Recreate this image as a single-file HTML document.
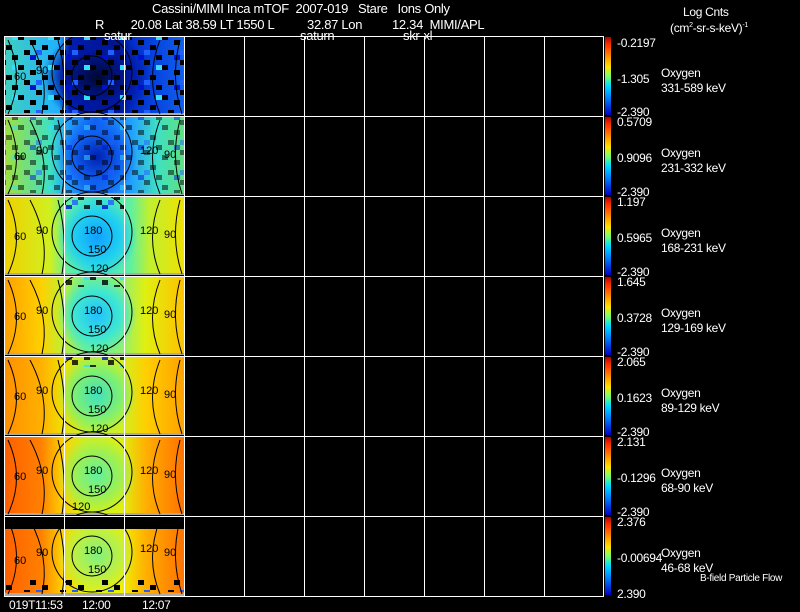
<!DOCTYPE html>
<html><head><style>
body{margin:0;background:#000;width:800px;height:609px;overflow:hidden;position:relative;font-family:"Liberation Sans",sans-serif;color:#fff}
.t{position:absolute;font-size:12px;white-space:pre;line-height:12px;letter-spacing:-0.3px}
.d{position:absolute;left:5px;width:180px;height:77px}
.g{position:absolute;left:5px;width:180px;height:2px;background:#aaa}
.cb{position:absolute;left:605px;width:6px;height:78px;background:linear-gradient(#b00000,#ff3000 10%,#ff9000 25%,#ffe000 38%,#80ff60 50%,#00e0ff 62%,#0080ff 78%,#0000c0)}
</style></head><body>
<div class="t" style="left:152px;top:3px;font-size:13px">Cassini/MIMI Inca mTOF  2007-019   Stare   Ions Only</div>
<div class="t" style="left:95px;top:19px;font-size:13px">R        20.08 Lat 38.59 LT 1550 L          32.87 Lon         12.34  MIMI/APL</div>
<div class="t" style="left:683px;top:6px">Log Cnts</div>
<div class="t" style="left:670px;top:20px">(cm<sup style="font-size:7px">2</sup>-sr-s-keV)<sup style="font-size:7px">-1</sup></div>

<div class="d" style="top:37px;background:radial-gradient(ellipse 55px 45px at 92px 40px,#000830,#0018a0 60%,transparent 100%),linear-gradient(90deg,#40d0c0,#20b0ff 30%,#0020c0 36%,#001080 60%,#0030d0 72%,#1060f0)"></div>
<div class="d" style="top:117px;background:radial-gradient(ellipse 40px 40px at 92px 40px,#0020b0,#1060f0 60%,transparent 100%),linear-gradient(90deg,#a0e040,#40e0c0 25%,#20a0ff 35%,#1060f0 50%,#20a0ff 70%,#40e0c0 85%,#60e080)"></div>
<div class="d" style="top:197px;background:radial-gradient(ellipse 40px 40px at 92px 40px,#10a0ff,#20d0f0 60%,transparent 100%),linear-gradient(90deg,#f0d000,#d0f020 25%,#60f0a0 35%,#40e0d0 50%,#60f0a0 70%,#c0f030 80%,#f0e000)"></div>
<div class="d" style="top:277px;background:radial-gradient(ellipse 40px 40px at 92px 38px,#20c0ff,#40e8d0 60%,transparent 100%),linear-gradient(90deg,#ffa000,#ffd000 20%,#c0f030 32%,#70f090 45%,#90f070 65%,#e0f010 78%,#ffc000)"></div>
<div class="d" style="top:357px;background:radial-gradient(ellipse 40px 40px at 92px 38px,#40e0c0,#80f070 60%,transparent 100%),linear-gradient(90deg,#ff9000,#ffb000 20%,#f0e000 32%,#c0f030 45%,#d0f020 65%,#ffd000 78%,#ffa000)"></div>
<div class="d" style="top:437px;background:radial-gradient(ellipse 40px 40px at 92px 38px,#60f0a0,#a0f050 60%,transparent 100%),linear-gradient(90deg,#ff6000,#ff8000 20%,#ffd000 32%,#d0f020 45%,#e0f010 65%,#ffb000 78%,#ff7000)"></div>
<div class="d" style="top:517px;background:radial-gradient(ellipse 40px 40px at 92px 38px,#80f080,#c0f040 60%,transparent 100%),linear-gradient(90deg,#ff6000,#ff8000 20%,#ffd000 32%,#e0f010 45%,#f0f000 65%,#ffb000 78%,#ff7000)"></div>
<div class="g" style="top:113px"></div><div class="g" style="top:193px"></div><div class="g" style="top:273px"></div><div class="g" style="top:353px"></div><div class="g" style="top:433px"></div><div class="g" style="top:513px"></div><div class="g" style="top:593px;height:4px"></div>

<svg width="800" height="609" style="position:absolute;left:0;top:0" font-family="Liberation Sans" font-size="11">
<defs>
<pattern id="n" width="36" height="30" patternUnits="userSpaceOnUse">
<rect x="0" y="0" width="6" height="5" fill="#000"/><rect x="18" y="5" width="6" height="5" fill="#000"/><rect x="30" y="10" width="6" height="5" fill="#000"/><rect x="6" y="15" width="6" height="5" fill="#000"/><rect x="24" y="20" width="6" height="5" fill="#000"/><rect x="12" y="25" width="6" height="5" fill="#000"/>
<rect x="12" y="5" width="6" height="5" fill="#30e0ff"/><rect x="0" y="20" width="6" height="5" fill="#2060ff"/><rect x="30" y="25" width="6" height="5" fill="#0010d0"/>
</pattern>
</defs>
<rect x="5" y="37" width="180" height="76" fill="url(#n)"/>
<rect x="65" y="37" width="60" height="76" fill="url(#n)" transform="translate(0,0)" opacity="0.7"/>
<rect x="5" y="117" width="180" height="76" fill="url(#n)" opacity="0.5"/>
<rect x="65" y="197" width="60" height="12" fill="url(#n)" opacity="0.8"/>
<rect x="65" y="277" width="60" height="10" fill="url(#n)" opacity="0.8"/>
<rect x="65" y="357" width="60" height="10" fill="url(#n)" opacity="0.8"/>
<rect x="5" y="517" width="180" height="12" fill="#000"/>
<rect x="5" y="580" width="180" height="12" fill="url(#n)"/>
<g fill="none" stroke="#000" stroke-width="1">
<g id="c"><path d="M8 40 Q25 78 8 114"/><path d="M30 40 Q50 78 42 114"/><path d="M58 40 Q68 78 62 114"/><circle cx="92" cy="76" r="20"/><circle cx="92" cy="72" r="40"/><path d="M160 40 Q145 78 160 114"/><path d="M180 40 Q170 78 182 114"/></g>
<use href="#c" y="80"/><use href="#c" y="160"/><use href="#c" y="240"/><use href="#c" y="320"/><use href="#c" y="400"/><use href="#c" y="480"/>
</g>
<g fill="#000">
<text x="14" y="80">60</text><text x="36" y="74">90</text>
<text x="14" y="160">60</text><text x="36" y="154">90</text><text x="140" y="154">120</text><text x="164" y="158">90</text>
<text x="14" y="240">60</text><text x="36" y="234">90</text><text x="84" y="234">180</text><text x="88" y="253">150</text><text x="90" y="272">120</text><text x="140" y="234">120</text><text x="164" y="238">90</text>
<text x="14" y="320">60</text><text x="36" y="314">90</text><text x="84" y="314">180</text><text x="88" y="333">150</text><text x="90" y="352">120</text><text x="140" y="314">120</text><text x="164" y="318">90</text>
<text x="14" y="400">60</text><text x="36" y="394">90</text><text x="84" y="394">180</text><text x="88" y="413">150</text><text x="90" y="432">120</text><text x="140" y="394">120</text><text x="164" y="398">90</text>
<text x="14" y="480">60</text><text x="36" y="474">90</text><text x="84" y="474">180</text><text x="88" y="493">150</text><text x="72" y="510">120</text><text x="140" y="474">120</text><text x="164" y="478">90</text>
<text x="14" y="564">60</text><text x="36" y="556">90</text><text x="84" y="554">180</text><text x="88" y="573">150</text><text x="140" y="552">120</text><text x="164" y="556">90</text>
</g>
<g stroke="#fff" stroke-width="1" fill="none">
<rect x="4.5" y="36.5" width="599" height="560"/>
<path d="M64.5 36V597M124.5 36V597M184.5 36V597M244.5 36V597M304.5 36V597M364.5 36V597M424.5 36V597M484.5 36V597M544.5 36V597"/>
<path d="M4 116.5H604M4 196.5H604M4 276.5H604M4 356.5H604M4 436.5H604M4 516.5H604"/>
</g>
</svg>
<div class="t" style="left:104px;top:30px;font-size:13px">satur</div>
<div class="t" style="left:300px;top:30px;font-size:13px">saturn</div>
<div class="t" style="left:403px;top:30px;font-size:13px">skr-xl</div>

<div class="cb" style="top:37px"></div><div class="cb" style="top:117px"></div><div class="cb" style="top:197px"></div><div class="cb" style="top:277px"></div><div class="cb" style="top:357px"></div><div class="cb" style="top:437px"></div><div class="cb" style="top:517px"></div>

<div class="t" style="left:617px;top:37px">-0.2197</div><div class="t" style="left:617px;top:73px">-1.305</div><div class="t" style="left:617px;top:106px">-2.390</div>
<div class="t" style="left:617px;top:116px">0.5709</div><div class="t" style="left:617px;top:152px">0.9096</div><div class="t" style="left:617px;top:186px">-2.390</div>
<div class="t" style="left:617px;top:196px">1.197</div><div class="t" style="left:617px;top:232px">0.5965</div><div class="t" style="left:617px;top:266px">-2.390</div>
<div class="t" style="left:617px;top:276px">1.645</div><div class="t" style="left:617px;top:312px">0.3728</div><div class="t" style="left:617px;top:346px">-2.390</div>
<div class="t" style="left:617px;top:356px">2.065</div><div class="t" style="left:617px;top:392px">0.1623</div><div class="t" style="left:617px;top:426px">-2.390</div>
<div class="t" style="left:617px;top:436px">2.131</div><div class="t" style="left:617px;top:472px">-0.1296</div><div class="t" style="left:617px;top:506px">-2.390</div>
<div class="t" style="left:617px;top:516px">2.376</div><div class="t" style="left:617px;top:552px">-0.00694</div><div class="t" style="left:617px;top:588px">2.390</div>

<div class="t" style="left:661px;top:67px">Oxygen</div><div class="t" style="left:661px;top:82px">331-589 keV</div>
<div class="t" style="left:661px;top:147px">Oxygen</div><div class="t" style="left:661px;top:162px">231-332 keV</div>
<div class="t" style="left:661px;top:227px">Oxygen</div><div class="t" style="left:661px;top:242px">168-231 keV</div>
<div class="t" style="left:661px;top:307px">Oxygen</div><div class="t" style="left:661px;top:322px">129-169 keV</div>
<div class="t" style="left:661px;top:387px">Oxygen</div><div class="t" style="left:661px;top:402px">89-129 keV</div>
<div class="t" style="left:661px;top:467px">Oxygen</div><div class="t" style="left:661px;top:482px">68-90 keV</div>
<div class="t" style="left:661px;top:547px">Oxygen</div><div class="t" style="left:661px;top:562px">46-68 keV</div>
<div class="t" style="left:700px;top:573px;font-size:10px">B-field Particle Flow</div>

<div class="t" style="left:9px;top:599px">019T11:53</div>
<div class="t" style="left:82px;top:599px">12:00</div>
<div class="t" style="left:142px;top:599px">12:07</div>
</body></html>
